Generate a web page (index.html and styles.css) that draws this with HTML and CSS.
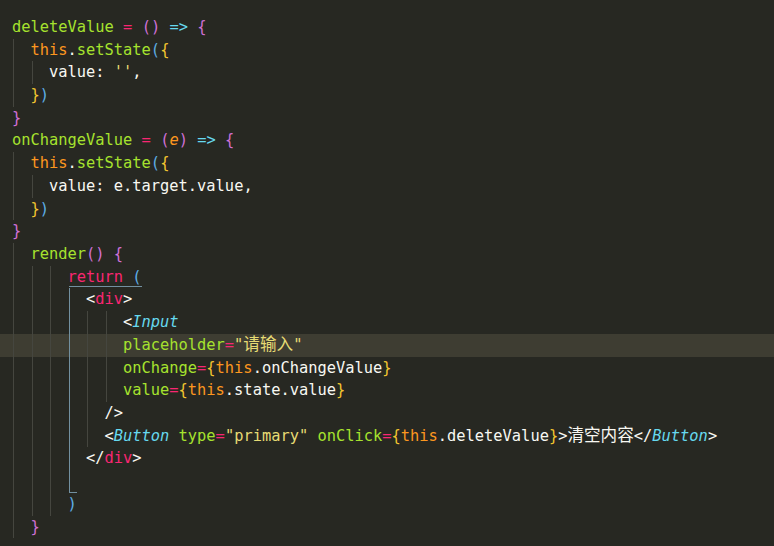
FILE: index.html
```html
<!DOCTYPE html>
<html lang="zh-CN">
<head>
<meta charset="utf-8">
<title>code</title>
<link rel="stylesheet" href="styles.css">
</head>
<body>
<div class="code">
<div class="ln"><span class="fn">deleteValue</span> <span class="op">=</span> <span class="b1">()</span> <span class="ar">=&gt;</span> <span class="b1">{</span></div>
<div class="ln"><span class="g"></span><span class="th">this</span>.<span class="fn">setState</span><span class="b2">(</span><span class="b3">{</span></div>
<div class="ln"><span class="g"></span><span class="g"></span>value: <span class="st">''</span>,</div>
<div class="ln"><span class="g"></span><span class="b3">}</span><span class="b2">)</span></div>
<div class="ln"><span class="b1">}</span></div>
<div class="ln"><span class="fn">onChangeValue</span> <span class="op">=</span> <span class="b1">(</span><span class="pa">e</span><span class="b1">)</span> <span class="ar">=&gt;</span> <span class="b1">{</span></div>
<div class="ln"><span class="g"></span><span class="th">this</span>.<span class="fn">setState</span><span class="b2">(</span><span class="b3">{</span></div>
<div class="ln"><span class="g"></span><span class="g"></span>value: e.target.value,</div>
<div class="ln"><span class="g"></span><span class="b3">}</span><span class="b2">)</span></div>
<div class="ln"><span class="b1">}</span></div>
<div class="ln"><span class="g"></span><span class="fn">render</span><span class="b1">()</span> <span class="b1">{</span></div>
<div class="ln"><span class="g"></span><span class="g"></span><span class="g"></span><span class="open"><span class="kw">return</span> <span class="b2">(</span></span></div>
<div class="ln"><span class="g"></span><span class="g"></span><span class="g"></span><span class="g act"></span>&lt;<span class="kw">div</span>&gt;</div>
<div class="ln"><span class="g"></span><span class="g"></span><span class="g"></span><span class="g act"></span><span class="g"></span><span class="g"></span>&lt;<span class="cp">Input</span></div>
<div class="ln hl"><span class="g"></span><span class="g"></span><span class="g"></span><span class="g act"></span><span class="g"></span><span class="g"></span><span class="fn">placeholder</span><span class="op">=</span><span class="st">"<span class="cjk">请输入</span>"</span></div>
<div class="ln"><span class="g"></span><span class="g"></span><span class="g"></span><span class="g act"></span><span class="g"></span><span class="g"></span><span class="fn">onChange</span><span class="op">=</span><span class="b3">{</span><span class="th">this</span>.onChangeValue<span class="b3">}</span></div>
<div class="ln"><span class="g"></span><span class="g"></span><span class="g"></span><span class="g act"></span><span class="g"></span><span class="g"></span><span class="fn">value</span><span class="op">=</span><span class="b3">{</span><span class="th">this</span>.state.value<span class="b3">}</span></div>
<div class="ln"><span class="g"></span><span class="g"></span><span class="g"></span><span class="g act"></span><span class="g"></span>/&gt;</div>
<div class="ln"><span class="g"></span><span class="g"></span><span class="g"></span><span class="g act"></span><span class="g"></span>&lt;<span class="cp">Button</span> <span class="fn">type</span><span class="op">=</span><span class="st">"primary"</span> <span class="fn">onClick</span><span class="op">=</span><span class="b3">{</span><span class="th">this</span>.deleteValue<span class="b3">}</span>&gt;<span class="cjk">清空内容</span>&lt;/<span class="cp">Button</span>&gt;</div>
<div class="ln"><span class="g"></span><span class="g"></span><span class="g"></span><span class="g act"></span>&lt;/<span class="kw">div</span>&gt;</div>
<div class="ln"><span class="g"></span><span class="g"></span><span class="g"></span><span class="g act end"></span></div>
<div class="ln"><span class="g"></span><span class="g"></span><span class="g"></span><span class="b2">)</span></div>
<div class="ln"><span class="g"></span><span class="b1">}</span></div>
</div>
</body>
</html>
```
FILE: styles.css
```css
html, body {
  margin: 0;
  padding: 0;
  background: #272822;
}
body {
  width: 774px;
  height: 546px;
  overflow: hidden;
}
.code {
  --guide: #45463f;
  --act: #7290a0;
  padding: 15.8px 0 0 0;
  font-family: "DejaVu Sans Mono", "Liberation Mono", monospace;
  font-size: 15.38px;
  line-height: 22.73px;
  color: #f8f8f2;
}
.ln {
  height: 22.73px;
  padding-left: 12px;
  white-space: pre;
}
.hl {
  background: #3e3d32;
}
.g {
  display: inline-block;
  vertical-align: top;
  width: 2ch;
  height: 22.73px;
  background: linear-gradient(var(--guide), var(--guide)) 1px 0 / 1px 100% no-repeat;
}
.g.act {
  background: linear-gradient(var(--act), var(--act)) 1px 0 / 1px 100% no-repeat;
}
.g.end {
  width: 9px;
  background:
    linear-gradient(var(--act), var(--act)) 1px 0 / 1px 100% no-repeat,
    linear-gradient(var(--act), var(--act)) 1px 100% / 8px 1px no-repeat;
}
.open {
  display: inline-block;
  vertical-align: top;
  height: 22.73px;
  background: linear-gradient(var(--act), var(--act)) 1px calc(100% - 1px) / calc(100% - 1px) 1px no-repeat;
}
.fn { color: #a6e22e; }
.op { color: #f92672; }
.kw { color: #f92672; }
.ar { color: #66d9ef; }
.th { color: #fd971f; }
.pa { color: #fd971f; font-style: italic; }
.st { color: #e6db74; }
.cp { color: #66d9ef; font-style: italic; }
.b1 { color: #d070d6; }
.b2 { color: #5eaee6; }
.b3 { color: #f2c530; }
.cjk {
  font-family: "Noto Sans CJK SC", sans-serif;
  font-size: 16.6px;
  line-height: 0;
}
```
